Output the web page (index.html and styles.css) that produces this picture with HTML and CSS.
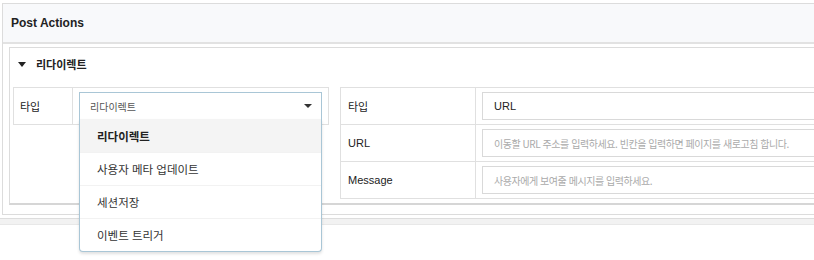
FILE: index.html
```html
<!DOCTYPE html>
<html lang="ko">
<head>
<meta charset="utf-8">
<link rel="stylesheet" href="styles.css">
</head>
<body>
<div class="panel">
  <div class="panel-header">Post Actions</div>
  <div class="panel-body">
    <div class="box">
      <div class="box-title"><span class="caret-down"></span><span>리다이렉트</span></div>
      <div class="box-content">
        <div class="tbl tbl-left">
          <div class="row">
            <div class="label">타입</div>
            <div class="cell">
              <div class="select-wrap">
                <div class="select"><span>리다이렉트</span><span class="sel-caret"></span></div>
                <ul class="menu">
                  <li class="item active">리다이렉트</li>
                  <li class="item">사용자 메타 업데이트</li>
                  <li class="item">세션저장</li>
                  <li class="item">이벤트 트리거</li>
                </ul>
              </div>
            </div>
          </div>
        </div>
        <div class="tbl tbl-right">
          <div class="row">
            <div class="label">타입</div>
            <div class="cell"><div class="input value">URL</div></div>
          </div>
          <div class="row">
            <div class="label">URL</div>
            <div class="cell"><div class="input placeholder">이동할 URL 주소를 입력하세요. 빈칸을 입력하면 페이지를 새로고침 합니다.</div></div>
          </div>
          <div class="row">
            <div class="label">Message</div>
            <div class="cell"><div class="input placeholder">사용자에게 보여줄 메시지를 입력하세요.</div></div>
          </div>
        </div>
      </div>
    </div>
  </div>
</div>
<div class="next-bar"></div>
</body>
</html>
```

FILE: styles.css
```css
html, body {
  margin: 0;
  padding: 0;
  background: #fff;
  overflow: hidden;
  width: 814px;
  height: 260px;
}
body {
  font-family: "Liberation Sans", Arial, "Noto Sans CJK KR", sans-serif;
  color: #333;
  font-size: 12px;
}
.panel {
  margin: 3px 0 0 2px;
  width: 1000px;
  border: 1px solid #dcdcdc;
  box-sizing: border-box;
}
.panel-header {
  height: 38px;
  background: #f8f9fb;
  border-bottom: 2px solid #e2e2e2;
  padding-left: 8px;
  display: flex;
  align-items: center;
  font-weight: bold;
  font-size: 12px;
  color: #222;
}
.panel-body {
  padding: 3px 5px 9px 6px;
}
.box {
  border: 1px solid #dcdcdc;
  border-bottom: 2px solid #d6d6d6;
  padding: 0 3px 4px 3px;
}
.box-title {
  height: 39px;
  box-sizing: border-box;
  padding: 0 0 8px 5px;
  display: flex;
  align-items: center;
  font-family: "Noto Sans CJK KR", sans-serif;
  font-weight: bold;
  font-size: 11px;
  color: #222;
}
.caret-down {
  width: 0;
  height: 0;
  border-left: 4px solid transparent;
  border-right: 4px solid transparent;
  border-top: 5px solid #222;
  margin-right: 10px;
  margin-top: 1px;
}
.box-content {
  display: flex;
  align-items: flex-start;
  gap: 11px;
}
.tbl {
  border: 1px solid #e0e0e0;
}
.tbl-left {
  width: 316px;
  box-sizing: border-box;
}
.tbl-right {
  flex: 1;
}
.row {
  display: flex;
  height: 37px;
  border-bottom: 1px solid #e0e0e0;
  box-sizing: border-box;
}
.row:last-child {
  border-bottom: 0;
  height: 36px;
}
.label {
  display: flex;
  align-items: center;
  padding-left: 6px;
  border-right: 1px solid #e0e0e0;
  font-size: 11px;
  color: #222;
}
.tbl-left .label { width: 52px; }
.tbl-right .label { width: 127px; padding-left: 7px; }
.cell {
  flex: 1;
  padding: 4px 6px;
  display: flex;
  align-items: center;
}
.select-wrap {
  position: relative;
  flex: 1;
}
.select {
  height: 28px;
  box-sizing: border-box;
  border: 1px solid #a9c6d6;
  border-bottom-color: #d8e3ea;
  display: flex;
  align-items: center;
  justify-content: space-between;
  padding: 0 9px 0 10px;
  font-family: "Noto Sans CJK KR", sans-serif;
  font-size: 10px;
  color: #555;
}
.sel-caret {
  width: 0;
  height: 0;
  border-left: 4px solid transparent;
  border-right: 4px solid transparent;
  border-top: 4px solid #333;
}
.menu {
  position: absolute;
  left: 0;
  right: 0;
  top: 27px;
  margin: 0;
  padding: 0;
  list-style: none;
  background: #fff;
  border: 1px solid #a9c6d6;
  border-top: 0;
  border-radius: 0 0 4px 4px;
  box-shadow: 0 2px 3px rgba(0,0,0,0.12);
  z-index: 5;
}
.item {
  height: 33px;
  display: flex;
  align-items: center;
  padding-left: 17px;
  font-family: "Noto Sans CJK KR", sans-serif;
  font-size: 11.5px;
  color: #333;
  border-top: 1px solid #f2f2f2;
  box-sizing: border-box;
}
.item.active {
  background: #f4f4f4;
  font-weight: bold;
  color: #222;
  border-top: 0;
  height: 33px;
}
.input {
  flex: 1;
  height: 28px;
  box-sizing: border-box;
  border: 1px solid #d9d9d9;
  display: flex;
  align-items: center;
  padding-left: 11px;
  white-space: nowrap;
  overflow: hidden;
}
.input.value {
  font-size: 11px;
  color: #222;
}
.input.placeholder {
  font-family: "Noto Sans CJK KR", sans-serif;
  font-size: 10px;
  letter-spacing: -0.45px;
  color: #aaa;
}
.next-bar {
  margin-top: 3px;
  height: 5px;
  width: 1000px;
  border-top: 1px solid #dddddd;
  border-bottom: 1px solid #e8e8e8;
  background: #f2f2f2;
}
```
